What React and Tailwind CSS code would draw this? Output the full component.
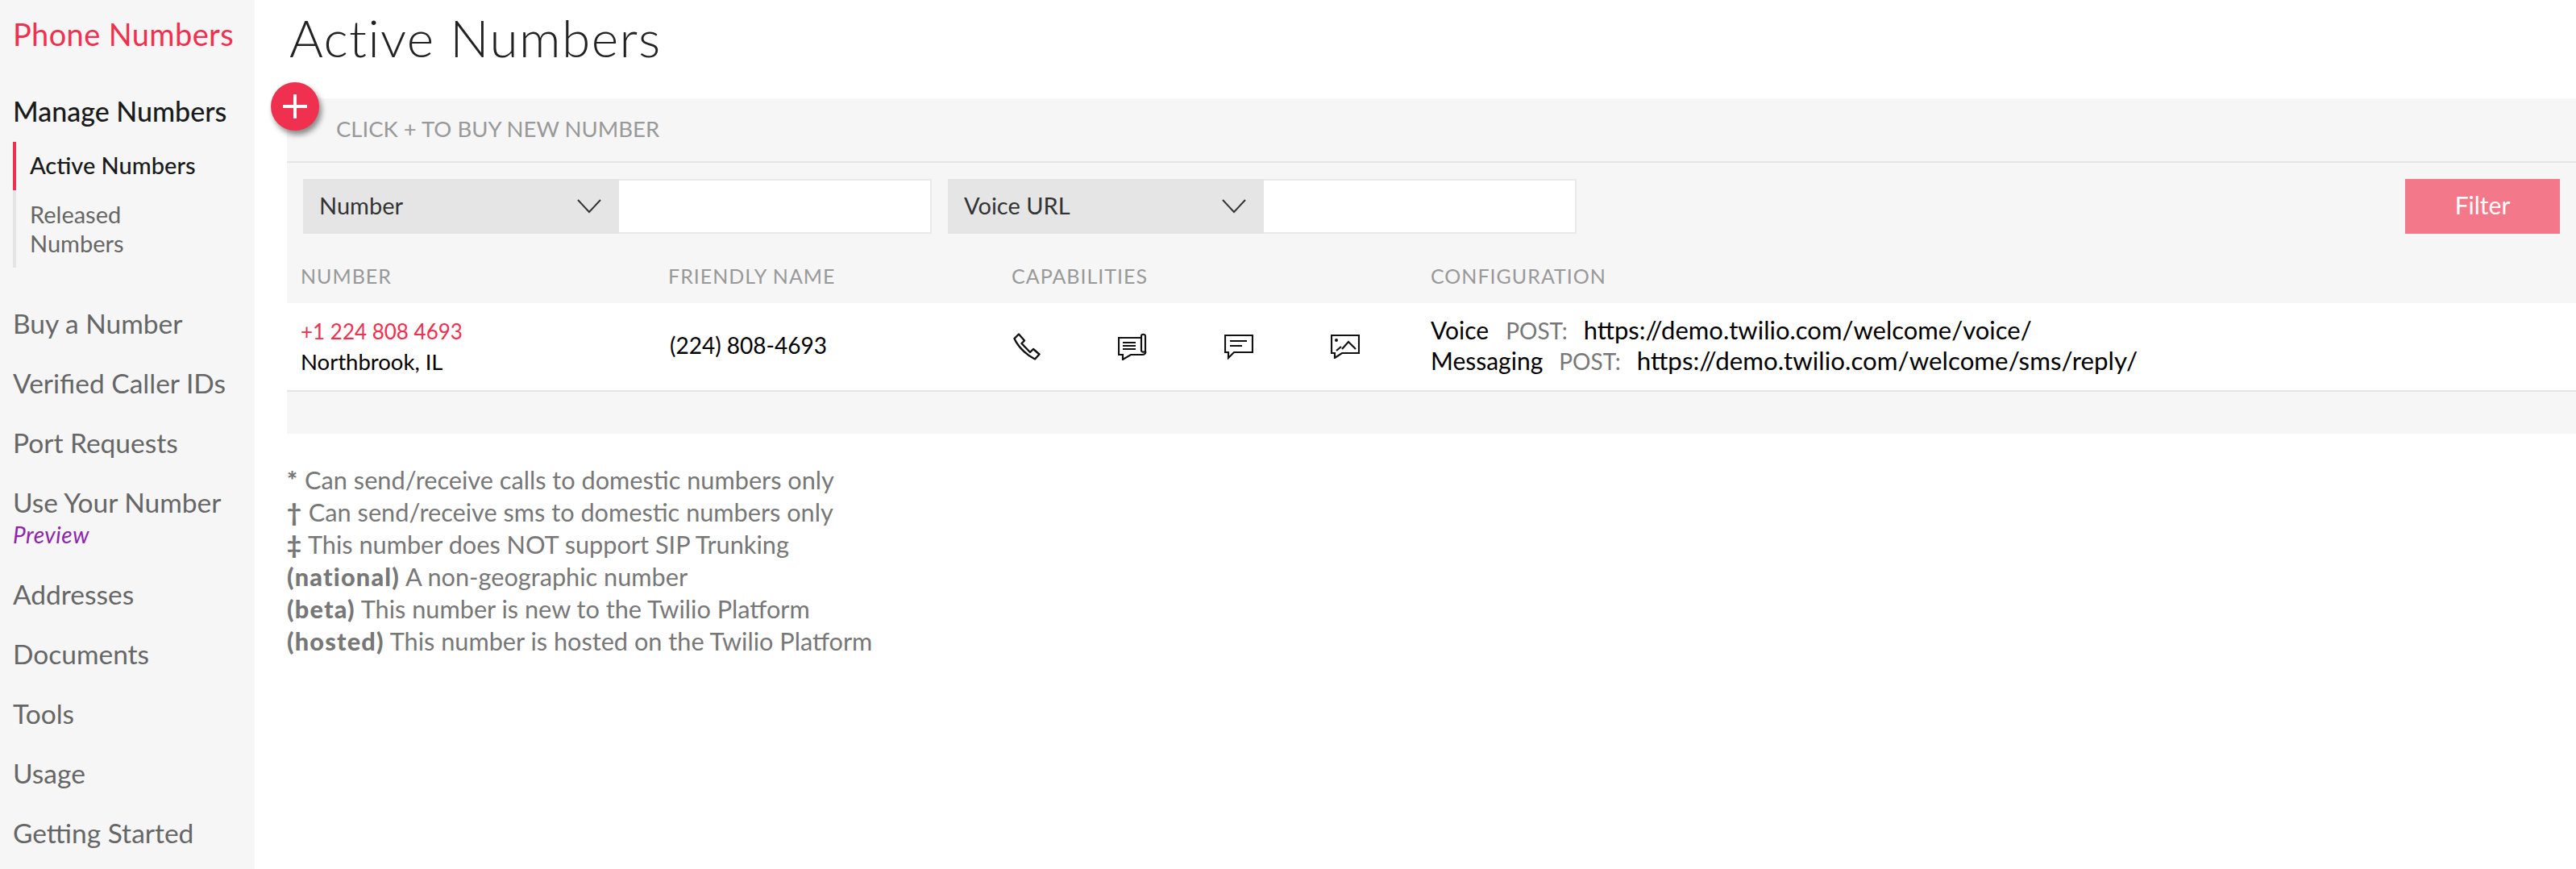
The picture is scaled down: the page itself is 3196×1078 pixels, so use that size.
import React from "react";

const navItems = ["Buy a Number", "Verified Caller IDs", "Port Requests"];
const navItemsAfter = ["Addresses", "Documents", "Tools", "Usage", "Getting Started"];

const notes = [
  ["*", "Can send/receive calls to domestic numbers only"],
  ["†", "Can send/receive sms to domestic numbers only"],
  ["‡", "This number does NOT support SIP Trunking"],
  ["(national)", "A non-geographic number"],
  ["(beta)", "This number is new to the Twilio Platform"],
  ["(hosted)", "This number is hosted on the Twilio Platform"],
];

const PhoneIcon = () => (
  <svg width="34" height="34" viewBox="0 0 34 34" fill="none" stroke="#111" strokeWidth="2.4" strokeLinejoin="round">
    <path d="M1.5 7 L7 1.5 L14 9.5 L10.5 13 L21 24 L25 20 L32.5 26.5 L27 32.5 C16 27 6 17 1.5 7Z" />
  </svg>
);

const ScrollIcon = () => (
  <svg width="36" height="34" viewBox="0 0 36 34" fill="none" stroke="#111" strokeWidth="2.2">
    <path d="M28 6 H1 V27 H6 V33 L16 27 H30 C33 27 35 25 34 23 V4 C34 1 29 1 29 4 V22 C29 24 32 24 34 23" />
    <path d="M6 12 H22 M6 16 H22 M6 20 H22" />
  </svg>
);

const ChatIcon = () => (
  <svg width="36" height="31" viewBox="0 0 36 31" fill="none" stroke="#111" strokeWidth="2.2">
    <path d="M1 1 H35 V22 H12 L5 29 V22 H1Z" />
    <path d="M7 8 H28 M7 14 H22" />
  </svg>
);

const ImageIcon = () => (
  <svg width="36" height="30" viewBox="0 0 36 30" fill="none" stroke="#111" strokeWidth="2.2">
    <path d="M1 1 H35 V23 H14 L5 29 V23 H1Z" />
    <path d="M7 20 L13 15 M14 18 L22 9 L31 18" />
    <circle cx="7" cy="7" r="2" fill="#111" stroke="none" />
  </svg>
);

const Chevron = () => (
  <svg width="30" height="18" viewBox="0 0 30 18" fill="none" stroke="#333" strokeWidth="2">
    <path d="M1 1 L15 16 L29 1" />
  </svg>
);

const FilterField = ({ label }) => (
  <div className="flex h-[68px] w-[780px]">
    <div className="flex w-[392px] items-center justify-between bg-[#e5e5e5] pl-[20px] pr-[22px] text-[29px] text-[#333]">
      <span className="-mt-[2px]">{label}</span>
      <Chevron />
    </div>
    <input className="h-full flex-1 border-2 border-l-0 border-[#e9e9e9] bg-white outline-none" />
  </div>
);

export default function App() {
  return (
    <div className="flex h-[1078px] overflow-hidden bg-white font-['Lato',sans-serif]">
      <aside className="w-[316px] shrink-0 bg-[#f6f6f6] pl-[16px]">
        <div className="flex h-[84px] items-center text-[38px] tracking-[0.01em] text-[#f0304f]">Phone Numbers</div>
        <div className="flex h-[92px] items-center pb-[9px] pt-[23px] text-[34px] font-medium text-[#1a1a1a]">Manage Numbers</div>
        <div className="h-[60px] border-l-4 border-[#f0304f] pl-[17px] text-[29px] font-medium leading-[58px] text-[#1a1a1a]">Active Numbers</div>
        <div className="h-[96px] border-l-4 border-[#e5e5e5] pl-[17px] pt-[12px] text-[29px] leading-[36px] text-[#666]">Released<br />Numbers</div>
        <div className="mt-[32px] text-[33.5px] text-[#666]">
          {navItems.map((item) => (
            <div key={item} className="h-[74px] leading-[74px]">{item}</div>
          ))}
          <div className="h-[114px]">
            <div className="leading-[74px]">Use Your Number</div>
            <div className="-mt-[12px] text-[28px] italic leading-[30px] tracking-[0.02em] text-[#8e24aa]">Preview</div>
          </div>
          {navItemsAfter.map((item) => (
            <div key={item} className="h-[74px] leading-[74px]">{item}</div>
          ))}
        </div>
      </aside>

      <main className="min-w-0 flex-1 pl-[40px]">
        <h1 className="h-[122px] pl-[3px] pt-[5px] text-[64px] font-light leading-[84px] tracking-[1.4px] text-[#222]">Active Numbers</h1>

        <div className="relative bg-[#f6f6f6]">
          <button className="absolute -left-[20px] -top-[20px] flex h-[60px] w-[60px] items-center justify-center rounded-full bg-[#f0304f] shadow-[3px_5px_7px_rgba(0,0,0,0.45)]">
            <svg width="32" height="32" viewBox="0 0 32 32" fill="#fff">
              <path d="M14 1 H18 V14 H31 V18 H18 V31 H14 V18 H1 V14 H14Z" />
            </svg>
          </button>
          <div className="h-[80px] border-b-2 border-[#e5e5e5] pl-[61px] pt-[20px] text-[27.5px] leading-[36px] text-[#999]">CLICK + TO BUY NEW NUMBER</div>

          <div className="flex items-center gap-[20px] pl-[20px] pr-[20px] pt-[20px]">
            <FilterField label="Number" />
            <FilterField label="Voice URL" />
            <button className="ml-auto h-[68px] w-[192px] bg-[#f3788a] pb-[3px] text-[30px] text-white">Filter</button>
          </div>

          <div className="grid h-[86px] grid-cols-[456px_426px_520px_1fr] items-center pl-[17px] pt-[20px] text-[25px] tracking-[0.04em] text-[#999]">
            <div>NUMBER</div>
            <div>FRIENDLY NAME</div>
            <div>CAPABILITIES</div>
            <div>CONFIGURATION</div>
          </div>

          <div className="grid h-[110px] grid-cols-[456px_426px_520px_1fr] items-center border-b-2 border-[#e5e5e5] bg-white pl-[17px] text-[27.5px] leading-[37px] text-black">
            <div>
              <div className="text-[26px] text-[#f0304f]">+1 224 808 4693</div>
              <div>Northbrook, IL</div>
            </div>
            <div className="-mt-[3px] pl-[2px] text-[28px]">(224) 808-4693</div>
            <div className="flex items-center">
              <div className="w-[132px] pl-[2px]"><PhoneIcon /></div>
              <div className="w-[132px]"><ScrollIcon /></div>
              <div className="w-[132px]"><ChatIcon /></div>
              <div className="w-[124px]"><ImageIcon /></div>
            </div>
            <div className="-mt-[2px] text-[30px]">
              <div>
                Voice<span className="ml-[21px] text-[28px] text-[#777]">POST:</span><span className="ml-[20px] text-[31px]">https://demo.twilio.com/welcome/voice/</span>
              </div>
              <div>
                Messaging<span className="ml-[20px] text-[28px] text-[#777]">POST:</span><span className="ml-[20px] text-[31.3px]">https://demo.twilio.com/welcome/sms/reply/</span>
              </div>
            </div>
          </div>
          <div className="h-[52px]" />
        </div>

        <div className="pt-[38px] text-[30.7px] leading-[40px] text-[#777]">
          {notes.map(([mark, text]) => (
            <div key={mark}>
              <b className="font-black tracking-[1.2px]">{mark}</b> {text}
            </div>
          ))}
        </div>
      </main>
    </div>
  );
}
